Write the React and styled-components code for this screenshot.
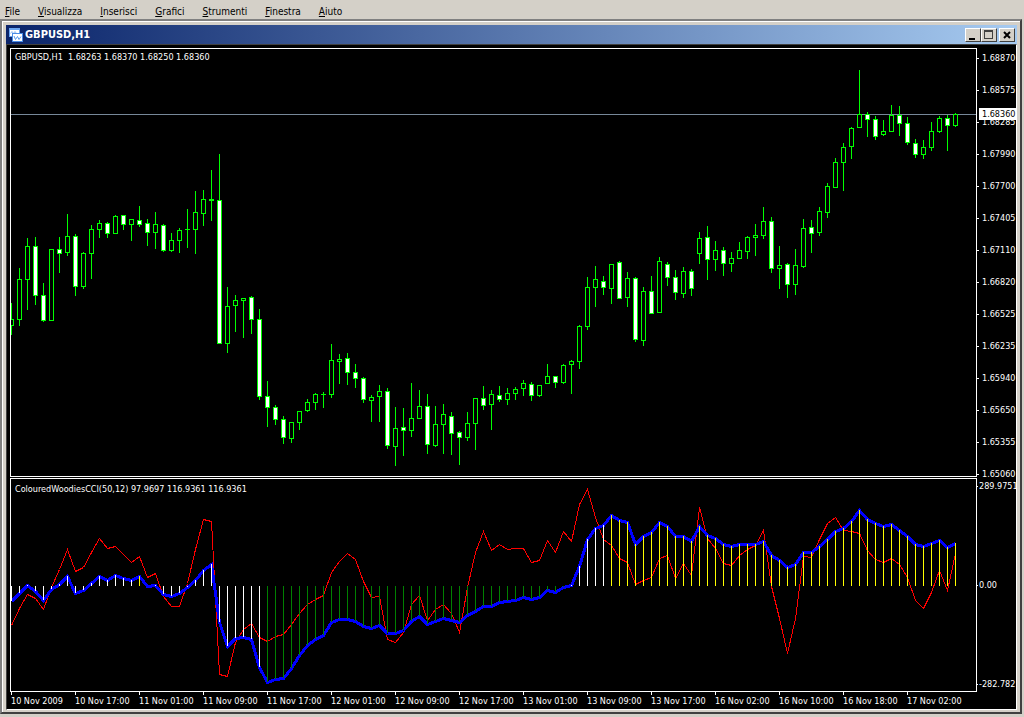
import React from "react";
import styled, { createGlobalStyle } from "styled-components";

const GlobalStyle = createGlobalStyle`
  * {
    box-sizing: border-box;
  }

  body {
    margin: 0;
    background: #d4d0c8;
    font-family: "DejaVu Sans Condensed", "DejaVu Sans", sans-serif;
  }
`;

const STEP = 8;
const PLOT_WIDTH = 965;
const PRICE_TOP = 49;
const PRICE_HEIGHT = 427;
const CCI_TOP = 479;
const CCI_HEIGHT = 212;
const CCI_ZERO = 586;
const BID_LINE = 114;

// [high, body top, body bottom, low, bearish]
const candles = [
  [303, 319, 326, 335, 0], [268, 279, 320, 326, 0], [238, 246, 280, 310, 0],
  [237, 246, 296, 305, 1], [283, 295, 321, 322, 1], [249, 249, 321, 321, 0],
  [237, 249, 254, 273, 1], [214, 236, 253, 256, 0], [234, 236, 287, 296, 1],
  [252, 253, 287, 289, 0], [225, 229, 254, 279, 0], [220, 223, 230, 238, 0],
  [222, 223, 234, 238, 1], [215, 216, 234, 234, 0], [215, 215, 225, 230, 1],
  [219, 219, 225, 241, 0], [206, 220, 225, 227, 1], [219, 223, 233, 246, 1],
  [212, 224, 233, 249, 0], [224, 225, 251, 252, 1], [233, 240, 251, 252, 0],
  [228, 230, 241, 253, 0], [209, 229, 230, 248, 0], [191, 212, 230, 254, 0],
  [190, 199, 214, 226, 0], [170, 199, 201, 221, 0], [154, 200, 344, 344, 1],
  [287, 306, 344, 353, 0], [295, 300, 306, 332, 0], [298, 298, 301, 338, 0],
  [296, 297, 320, 334, 1], [309, 319, 397, 400, 1], [381, 396, 408, 427, 1],
  [405, 407, 420, 425, 1], [416, 419, 438, 444, 1], [422, 422, 439, 443, 0],
  [411, 411, 423, 430, 0], [399, 402, 411, 412, 0], [393, 394, 403, 410, 0],
  [392, 394, 395, 408, 0], [344, 360, 395, 398, 0], [354, 359, 362, 384, 0],
  [353, 358, 373, 385, 1], [364, 372, 379, 388, 1], [377, 378, 400, 403, 1],
  [395, 397, 401, 422, 0], [385, 391, 397, 422, 0], [388, 391, 446, 449, 1],
  [407, 428, 447, 466, 0], [408, 427, 431, 456, 1], [383, 418, 431, 437, 0],
  [390, 406, 419, 419, 0], [394, 406, 445, 454, 1], [406, 424, 446, 447, 0],
  [404, 414, 425, 454, 0], [412, 416, 434, 455, 1], [431, 432, 438, 465, 1],
  [412, 423, 438, 441, 0], [398, 398, 424, 450, 0], [386, 398, 406, 410, 1],
  [390, 394, 405, 430, 0], [386, 395, 400, 402, 1], [388, 393, 400, 405, 0],
  [387, 389, 394, 400, 0], [380, 383, 389, 396, 0], [382, 384, 396, 401, 1],
  [385, 385, 396, 397, 0], [364, 376, 384, 384, 0], [376, 376, 383, 388, 1],
  [364, 365, 383, 384, 0], [360, 361, 365, 394, 0], [325, 326, 362, 369, 0],
  [277, 287, 327, 330, 0], [266, 279, 288, 307, 0], [276, 281, 288, 295, 1],
  [264, 264, 289, 304, 0], [261, 262, 299, 299, 1], [272, 278, 298, 307, 0],
  [277, 278, 340, 342, 1], [287, 291, 341, 346, 0], [276, 291, 314, 314, 1],
  [257, 261, 313, 313, 0], [262, 264, 278, 286, 1], [270, 277, 293, 300, 1],
  [267, 271, 294, 298, 0], [269, 271, 289, 296, 1], [232, 238, 254, 264, 0],
  [226, 237, 260, 280, 1], [241, 250, 260, 271, 0], [247, 250, 264, 276, 1],
  [252, 258, 264, 272, 0], [242, 250, 259, 259, 0], [236, 237, 252, 259, 0],
  [224, 235, 238, 256, 0], [207, 221, 236, 239, 0], [217, 221, 269, 273, 1],
  [246, 265, 269, 289, 0], [263, 264, 285, 298, 1], [249, 265, 285, 295, 0],
  [219, 228, 267, 268, 0], [220, 227, 234, 253, 1], [207, 211, 233, 236, 0],
  [183, 186, 213, 218, 0], [158, 162, 188, 188, 0], [143, 147, 163, 191, 0],
  [127, 128, 147, 159, 0], [70, 114, 128, 128, 0], [112, 114, 120, 137, 1],
  [116, 119, 137, 140, 1], [120, 131, 135, 136, 0], [105, 115, 132, 132, 0],
  [106, 115, 124, 136, 1], [117, 123, 143, 145, 1], [139, 143, 155, 158, 1],
  [140, 147, 155, 159, 0], [122, 131, 148, 151, 0], [116, 118, 132, 133, 0],
  [115, 118, 126, 151, 1], [113, 114, 126, 127, 0],
];

const slowCci = [
  601, 593, 585, 591, 600, 589, 584, 576, 593, 590, 583, 576, 580, 575, 578,
  580, 576, 586, 585, 594, 596, 593, 587, 580, 570, 564, 622, 646, 638, 637,
  639, 667, 682, 679, 678, 668, 655, 645, 639, 635, 622, 619, 619, 621, 626,
  628, 625, 633, 633, 630, 621, 616, 624, 621, 618, 620, 622, 615, 611, 606,
  606, 602, 601, 600, 597, 599, 597, 590, 592, 587, 585, 566, 539, 528, 525,
  515, 520, 522, 544, 536, 532, 522, 526, 536, 536, 541, 526, 535, 538, 544,
  546, 544, 544, 544, 541, 555, 560, 567, 564, 552, 552, 546, 539, 531, 528,
  521, 510, 519, 523, 526, 524, 530, 536, 544, 546, 543, 540, 547, 543,
];

const fastCci = [
  625, 608, 594, 598, 609, 587, 569, 549, 571, 567, 552, 538, 548, 546, 554,
  562, 556, 577, 573, 596, 606, 606, 583, 549, 519, 521, 674, 676, 642, 629,
  623, 637, 641, 636, 634, 624, 613, 604, 599, 595, 572, 561, 553, 559, 581,
  597, 596, 639, 642, 632, 604, 595, 620, 609, 604, 613, 632, 587, 552, 531,
  550, 544, 549, 548, 548, 562, 560, 540, 552, 531, 541, 504, 489, 517, 539,
  545, 558, 562, 584, 580, 577, 558, 555, 578, 563, 575, 507, 538, 548, 563,
  565, 555, 549, 545, 530, 586, 618, 653, 618, 556, 557, 539, 523, 517, 530,
  531, 533, 550, 559, 562, 558, 564, 577, 600, 608, 592, 570, 590, 553,
];

const prices = [
  "1.68870", "1.68575", "1.68285", "1.67990", "1.67700", "1.67405", "1.67110",
  "1.66820", "1.66525", "1.66235", "1.65940", "1.65650", "1.65355", "1.65060",
];

const times = [
  "10 Nov 2009", "10 Nov 17:00", "11 Nov 01:00", "11 Nov 09:00",
  "11 Nov 17:00", "12 Nov 01:00", "12 Nov 09:00", "12 Nov 17:00",
  "13 Nov 01:00", "13 Nov 09:00", "13 Nov 17:00", "16 Nov 02:00",
  "16 Nov 10:00", "16 Nov 18:00", "17 Nov 02:00",
];

const menus = [
  "File", "Visualizza", "Inserisci", "Grafici", "Strumenti", "Finestra", "Aiuto",
];

const barColor = (i) => {
  if (i === 16 || i >= 75) return "#ffff00";
  if (i >= 32 && i < 70) return "#008000";
  return "#ffffff";
};

const toPoints = (values) =>
  values.map((y, i) => `${i * STEP + 0.5},${y - CCI_TOP + 0.5}`).join(" ");

const Candle = ({ index, data }) => {
  const [high, top, bottom, low, bearish] = data;
  const x = index * STEP;
  const height = bottom - top;
  return (
    <g>
      <rect x={x} y={high - PRICE_TOP} width="1" height={low - high} fill="#00ff00" />
      <rect x={x - 2} y={top - PRICE_TOP} width="5" height={height} fill="#00ff00" />
      {height > 2 && (
        <rect
          x={x - 1}
          y={top - PRICE_TOP + 1}
          width="3"
          height={height - 2}
          fill={bearish ? "#ffffff" : "#000000"}
        />
      )}
    </g>
  );
};

const PriceChart = () => (
  <Plot
    viewBox={`0 0 ${PLOT_WIDTH} ${PRICE_HEIGHT}`}
    height={PRICE_HEIGHT}
    preserveAspectRatio="none"
    role="img"
    aria-label="GBPUSD,H1"
  >
    <rect y={BID_LINE - PRICE_TOP} width={PLOT_WIDTH} height="1" fill="#778899" />
    {candles.map((data, i) => (
      <Candle key={i} index={i} data={data} />
    ))}
  </Plot>
);

const CciChart = () => (
  <Plot
    viewBox={`0 0 ${PLOT_WIDTH} ${CCI_HEIGHT}`}
    height={CCI_HEIGHT}
    preserveAspectRatio="none"
    role="img"
    aria-label="ColouredWoodiesCCI"
  >
    <polyline points={toPoints(fastCci)} fill="none" stroke="#ff0000" strokeWidth="1" />
    <polyline points={toPoints(slowCci)} fill="none" stroke="#0000ff" strokeWidth="3" />
    {slowCci.map((y, i) => (
      <rect
        key={i}
        x={i * STEP}
        y={Math.min(y, CCI_ZERO) - CCI_TOP}
        width="1"
        height={Math.abs(y - CCI_ZERO)}
        fill={barColor(i)}
      />
    ))}
  </Plot>
);

const ChartIcon = () => (
  <svg width="14" height="14" viewBox="0 0 14 14" aria-hidden="true">
    <rect x="0" y="0" width="11" height="9" fill="#6aa5f0" />
    <rect x="1" y="2" width="9" height="6" fill="#ffffff" />
    <path d="M1.500 5.500l1.500-2 1.500 2 1.500-2 1.500 2" fill="none" stroke="#8fbcf5" />
    <rect x="3" y="5" width="11" height="9" fill="#4a8ce6" />
    <rect x="4" y="6" width="9" height="7" fill="#ffffff" />
    <path d="M5 8l1.500 3.500 2-3 1.500 3 2-3" fill="none" stroke="#5a9bee" />
  </svg>
);

const App = () => (
  <>
    <GlobalStyle />
    <MenuBar>
      {menus.map((name) => (
        <MenuItem key={name} type="button">
          <u>{name[0]}</u>
          {name.slice(1)}
        </MenuItem>
      ))}
    </MenuBar>
    <Window>
      <TitleBar>
        <ChartIcon />
        <Title>GBPUSD,H1</Title>
        <TitleButton type="button" aria-label="Minimize">
          <svg width="12" height="10" viewBox="0 0 12 10" shapeRendering="crispEdges">
            <path d="M2 9h6" stroke="#000" strokeWidth="2" />
          </svg>
        </TitleButton>
        <TitleButton type="button" aria-label="Maximize">
          <svg width="12" height="10" viewBox="0 0 12 10" shapeRendering="crispEdges">
            <path d="M1 1h9" stroke="#404040" strokeWidth="2" />
            <path d="M1.500 1v8M9.500 1v8M1 8.500h9" fill="none" stroke="#404040" />
          </svg>
        </TitleButton>
        <TitleButton type="button" aria-label="Close" $spaced>
          <svg width="12" height="10" viewBox="0 0 12 10">
            <path d="M3 2l6 6M9 2l-6 6" stroke="#000" strokeWidth="2" />
          </svg>
        </TitleButton>
      </TitleBar>
      <Client>
        <Pane>
          <Caption>GBPUSD,H1&nbsp; 1.68263 1.68370 1.68250 1.68360</Caption>
          <PriceChart />
        </Pane>
        <PriceAxis>
          {prices.map((price) => (
            <Tick key={price}>{price}</Tick>
          ))}
          <BidPrice>1.68360</BidPrice>
        </PriceAxis>
        <Pane>
          <Caption $low>ColouredWoodiesCCI(50,12) 97.9697 116.9361 116.9361</Caption>
          <CciChart />
        </Pane>
        <CciAxis>
          <Tick $bare>289.9751</Tick>
          <Tick $bare>0.00</Tick>
          <Tick $bare>-282.782</Tick>
        </CciAxis>
        <TimeAxis>
          {times.map((time) => (
            <Time key={time}>{time}</Time>
          ))}
        </TimeAxis>
      </Client>
    </Window>
  </>
);

const MenuBar = styled.nav`
  display: flex;
  gap: 18px;
  height: 19px;
  padding: 4px 5px 0;
`;

const MenuItem = styled.button`
  padding: 0;
  border: 0;
  background: none;
  color: #000000;
  font-family: inherit;
  font-size: 10px;
  line-height: 14px;
`;

const Window = styled.main`
  margin-right: 2px;
  padding: 2px;
  border: 2px solid #404040;
  border-top-color: #808080;
  border-left-color: #808080;
  box-shadow: inset 1px 1px #ffffff;
`;

const TitleBar = styled.header`
  display: flex;
  align-items: center;
  height: 19px;
  margin: 2px 1px 0 2px;
  padding: 0 2px 0 3px;
  background: linear-gradient(to right, #0a246a, #a6caf0);
`;

const Title = styled.h1`
  flex: 1;
  margin: 0 0 0 2px;
  color: #ffffff;
  font-size: 11px;
  font-weight: bold;
`;

const TitleButton = styled.button`
  display: flex;
  align-items: center;
  justify-content: center;
  width: 16px;
  height: 14px;
  margin-left: ${({ $spaced }) => ($spaced ? "2px" : "0")};
  padding: 0;
  border: 1px solid;
  border-color: #ffffff #404040 #404040 #ffffff;
  background: #d4d0c8;
`;

const Client = styled.section`
  display: grid;
  grid-template-columns: minmax(0, 1fr) 39px;
  row-gap: 1px;
  margin: 0 1px 0 2px;
  padding: 3px 0 0 3px;
  border: 1px solid #404040;
  border-right-color: #ffffff;
  border-bottom-color: #ffffff;
  background: #000000;
  color: #ffffff;
  font-size: 9px;
`;

const Pane = styled.div`
  position: relative;
  border: 1px solid #ffffff;
`;

const Caption = styled.div`
  position: absolute;
  top: ${({ $low }) => ($low ? "4px" : "2px")};
  left: 4px;
  line-height: 12px;
  white-space: nowrap;
`;

const Plot = styled.svg`
  display: block;
  width: 100%;
  overflow: hidden;
  shape-rendering: crispEdges;
`;

const PriceAxis = styled.div`
  position: relative;
  display: flex;
  flex-direction: column;
  gap: 20px;
  height: 0;
  min-height: 100%;
  padding-top: 4px;
`;

const CciAxis = styled.div`
  display: flex;
  flex-direction: column;
  justify-content: space-between;
  padding: 2px 0;
`;

const Tick = styled.div`
  display: flex;
  flex-shrink: 0;
  align-items: center;
  line-height: 12px;
  white-space: nowrap;

  &::before {
    content: "";
    flex-shrink: 0;
    width: ${({ $bare }) => ($bare ? "1px" : "2px")};
    height: 1px;
    margin-right: ${({ $bare }) => ($bare ? "1px" : "3px")};
    background: #ffffff;
  }
`;

const BidPrice = styled.div`
  position: absolute;
  top: 60px;
  right: 0;
  left: 2px;
  padding-left: 3px;
  background: #ffffff;
  color: #000000;
  line-height: 12px;
`;

const TimeAxis = styled.div`
  display: grid;
  grid-template-columns: repeat(15, minmax(0, 64fr)) 5fr;
  height: 17px;
  margin-top: -1px;
  padding: 0 1px;
`;

const Time = styled.div`
  line-height: 12px;
  white-space: nowrap;

  &::before {
    content: "";
    display: block;
    width: 1px;
    height: 3px;
    background: #ffffff;
  }
`;

export default App;
